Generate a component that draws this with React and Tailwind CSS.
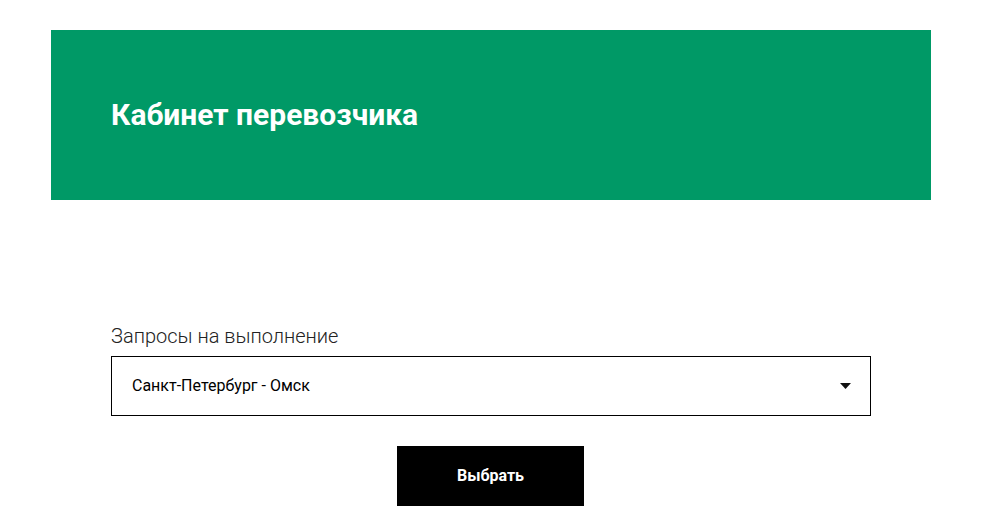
export default function App() {
  return (
    <div className="min-h-screen bg-white pt-[30px] font-['Roboto',sans-serif] text-black">
      <div className="ml-[51px] w-[880px]">
        <header className="flex h-[170px] items-center bg-[#009966] px-[60px]">
          <h1 className="text-[30px] font-bold leading-none text-white">Кабинет перевозчика</h1>
        </header>
        <section className="px-[60px] pt-[122px]">
          <label className="block text-[20px] font-light leading-[28px] text-[#222]">
            Запросы на выполнение
          </label>
          <div className="mt-[6px] flex h-[60px] items-center justify-between border border-black pl-[20px] pr-[19px]">
            <span className="text-[16px]">Санкт-Петербург - Омск</span>
            <svg width="11" height="6" viewBox="0 0 11 6">
              <path d="M0 0h11L5.5 6z" fill="#111" />
            </svg>
          </div>
          <div className="mt-[30px] flex">
            <button className="ml-[286px] h-[60px] w-[187px] bg-black text-[16px] font-bold text-white">
              Выбрать
            </button>
          </div>
        </section>
      </div>
    </div>
  );
}
